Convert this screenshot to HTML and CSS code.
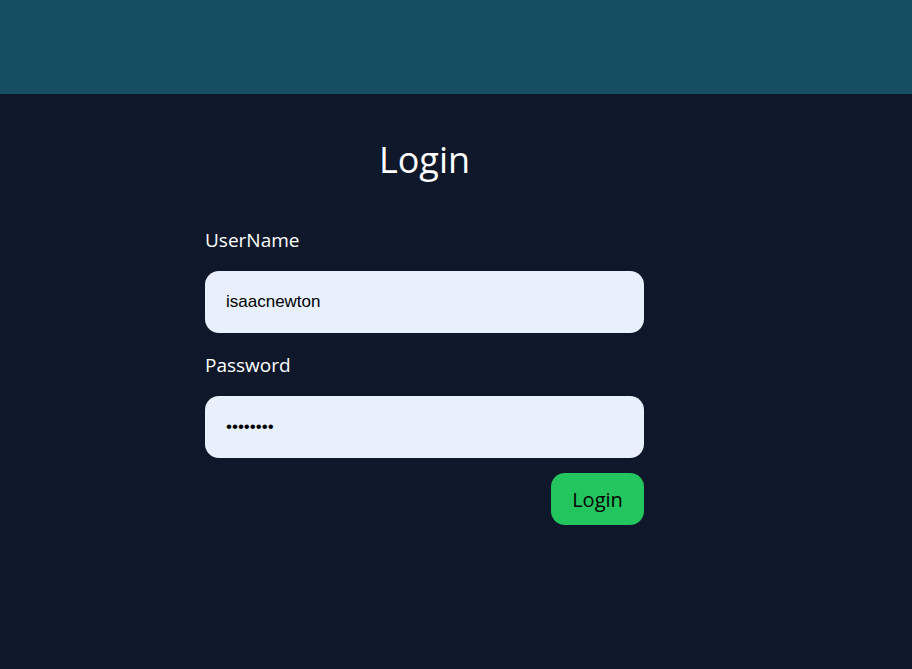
FILE: index.html
```html
<!DOCTYPE html>
<html lang="en">
<head>
<meta charset="utf-8">
<title>Login</title>
<link rel="stylesheet" href="styles.css">
</head>
<body>
<header class="topbar"></header>
<main class="main">
  <form class="login-form">
    <h1 class="title">Login</h1>
    <label class="label" for="username">UserName</label>
    <input class="field" id="username" type="text" value="isaacnewton">
    <label class="label" for="password">Password</label>
    <input class="field field-pass" id="password" type="password" value="password">
    <div class="actions">
      <button class="btn" type="button">Login</button>
    </div>
  </form>
</main>
</body>
</html>
```
FILE: styles.css
```css
html, body {
  margin: 0;
  padding: 0;
  height: 100%;
}
body {
  background: #0f172a;
  font-family: "Open Sans", "Noto Sans", sans-serif;
  color: #ffffff;
}
.topbar {
  height: 94px;
  background: #164e63;
}
.main {
  padding: 42px 0 0 205px;
}
.login-form {
  width: 439px;
  display: flex;
  flex-direction: column;
}
.title {
  margin: 0 0 42px;
  font-size: 36px;
  font-weight: 400;
  line-height: 48px;
  text-align: center;
}
.label {
  font-size: 19px;
  line-height: 28px;
  margin-bottom: 17px;
}
.field {
  box-sizing: border-box;
  height: 62px;
  border: none;
  border-radius: 14px;
  background: #e8f0fe;
  padding: 0 21px;
  font-family: "Liberation Sans", Arial, sans-serif;
  font-size: 17px;
  color: #000000;
  outline: none;
  margin-bottom: 18px;
}
.field-pass {
  margin-bottom: 15px;
}
.actions {
  display: flex;
  justify-content: flex-end;
}
.btn {
  width: 93px;
  height: 52px;
  border: none;
  border-radius: 14px;
  background: #22c55e;
  color: #000000;
  font-family: "Open Sans", "Noto Sans", sans-serif;
  font-size: 20px;
  padding: 0;
  cursor: pointer;
}
```
